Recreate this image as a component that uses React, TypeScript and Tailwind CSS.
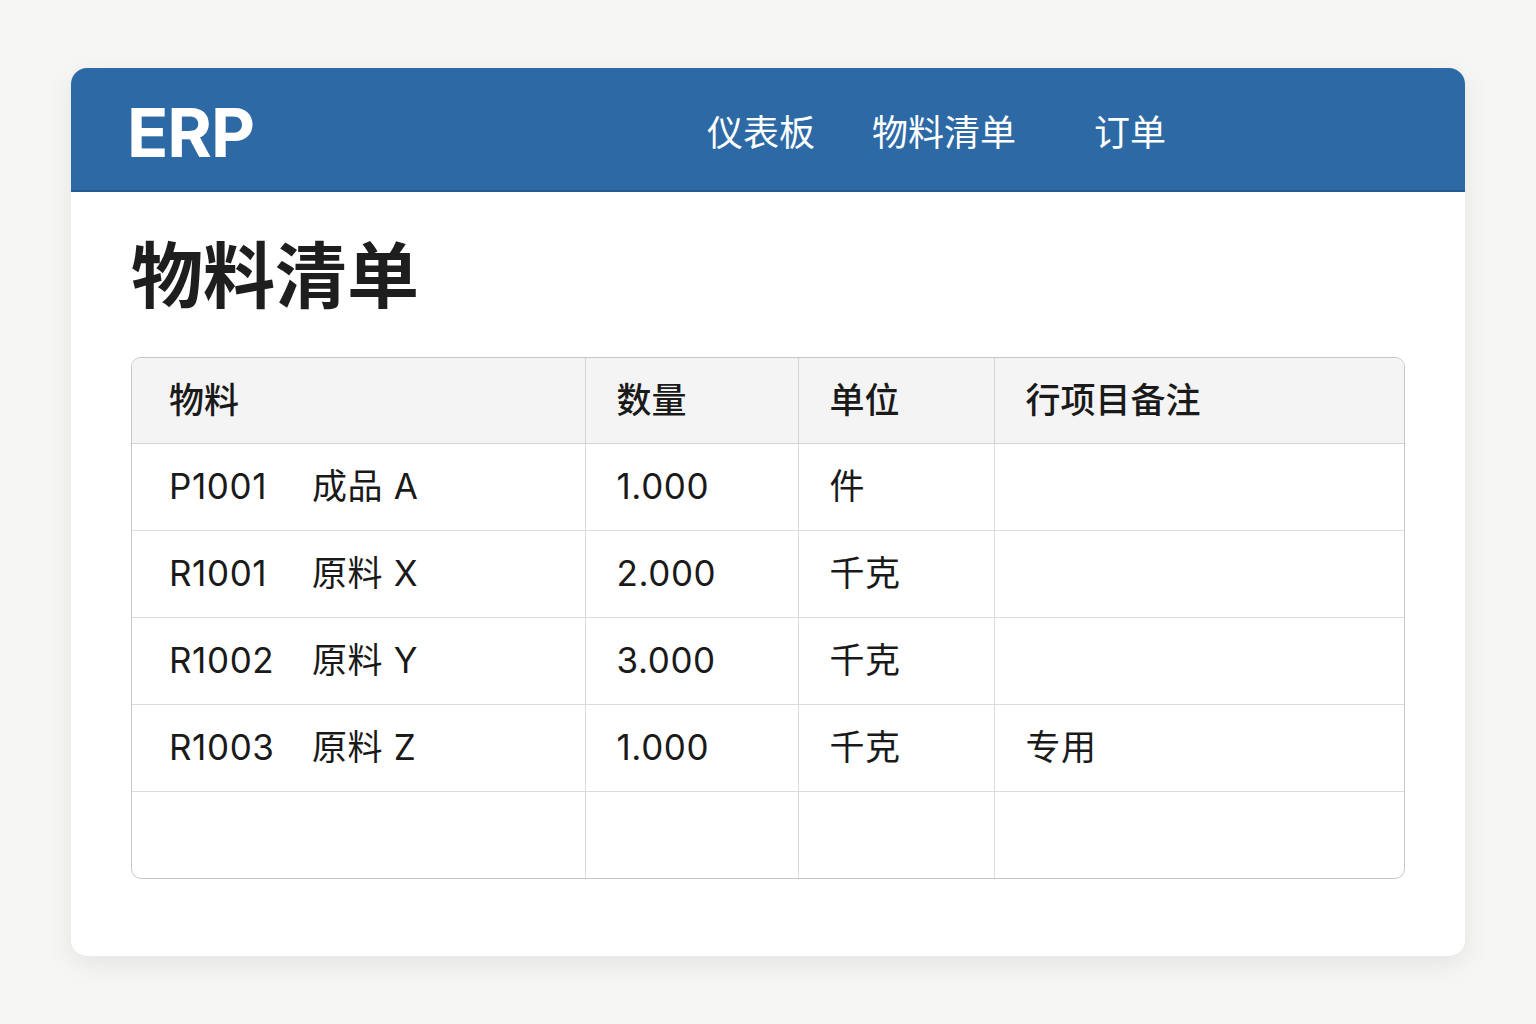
import React from "react";

const NAV = [
  { label: "仪表板", cls: "" },
  { label: "物料清单", cls: "ml-[57px]" },
  { label: "订单", cls: "ml-[78px]" },
];

const COLS = ["物料", "数量", "单位", "行项目备注"];

const ROWS = [
  { code: "P1001", name: "成品 A", qty: "1.000", unit: "件", note: "" },
  { code: "R1001", name: "原料 X", qty: "2.000", unit: "千克", note: "" },
  { code: "R1002", name: "原料 Y", qty: "3.000", unit: "千克", note: "" },
  { code: "R1003", name: "原料 Z", qty: "1.000", unit: "千克", note: "专用" },
];

const font = { fontFamily: '"Inter", "Noto Sans CJK SC", sans-serif' };

export default function App() {
  return (
    <div
      className="min-h-screen w-full bg-[#f6f6f5] px-[71px] pt-[68px]"
      style={font}
    >
      <div className="w-[1394px] overflow-hidden rounded-[16px] bg-white shadow-[0_8px_28px_rgba(0,0,0,0.08)]">
        {/* 顶部导航 */}
        <header className="flex h-[124px] items-center border-b-2 border-[#245a8f] bg-[#2d6aa5] pl-[56px]">
          <span className="mt-[6px] text-[68px] font-bold leading-none tracking-[-1px] text-white">
            ERP
          </span>
          <nav className="ml-[453px] mt-[8px] flex items-center">
            {NAV.map((n) => (
              <span
                key={n.label}
                className={`text-[36px] leading-none text-white ${n.cls}`}
              >
                {n.label}
              </span>
            ))}
          </nav>
        </header>

        <div className="px-[60px] pb-[77px]">
          <h1 className="mt-[40px] text-[72px] font-bold leading-[88px] text-[#1e1e1e]">
            物料清单
          </h1>

          <div className="mt-[37px] overflow-hidden rounded-[10px] border border-[#c6c6c6]">
            <table className="w-full table-fixed border-collapse">
              <colgroup>
                <col className="w-[453px]" />
                <col className="w-[213px]" />
                <col className="w-[196px]" />
                <col />
              </colgroup>
              <thead>
                <tr className="h-[85px] bg-[#f4f4f4]">
                  {COLS.map((c, i) => (
                    <th
                      key={c}
                      className={`border-b border-[#d4d4d4] text-left text-[35px] font-medium text-[#1a1a1a] ${
                        i === 0 ? "pl-[37px]" : "border-l pl-[31px]"
                      }`}
                    >
                      {c}
                    </th>
                  ))}
                </tr>
              </thead>
              <tbody>
                {ROWS.map((r) => (
                  <tr key={r.code} className="h-[87px] text-[35px] tracking-[0.6px] text-[#1a1a1a]">
                    <td className="border-b border-[#dcdcdc] pl-[37px]">
                      <span className="inline-block w-[143px]">{r.code}</span>
                      <span>{r.name}</span>
                    </td>
                    <td className="border-b border-l border-[#dcdcdc] pl-[31px]">
                      {r.qty}
                    </td>
                    <td className="border-b border-l border-[#dcdcdc] pl-[31px]">
                      {r.unit}
                    </td>
                    <td className="border-b border-l border-[#dcdcdc] pl-[31px]">
                      {r.note}
                    </td>
                  </tr>
                ))}
                <tr className="h-[87px]">
                  <td />
                  <td className="border-l border-[#dcdcdc]" />
                  <td className="border-l border-[#dcdcdc]" />
                  <td className="border-l border-[#dcdcdc]" />
                </tr>
              </tbody>
            </table>
          </div>
        </div>
      </div>
    </div>
  );
}
